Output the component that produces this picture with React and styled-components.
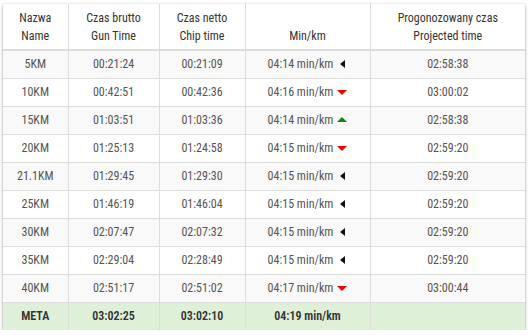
import styled, { createGlobalStyle } from "styled-components"

const GlobalStyle = createGlobalStyle`
  html, body {
    margin: 0;
    padding: 0;
    background: #ffffff;
  }
  body {
    font-family: Roboto, "Liberation Sans", sans-serif;
    font-stretch: condensed;
  }
`

const Page = styled.div`
  padding: 4px 4px 0 3px;
  width: 522px;
`

const Card = styled.div`
  background: #ffffff;
  box-shadow: 0 1px 3px rgba(0, 0, 0, 0.4);
`

const Table = styled.table`
  width: 100%;
  border-collapse: collapse;
  table-layout: fixed;
  font-size: 12px;
  color: #555555;
`

const Th = styled.th`
  font-weight: 400;
  color: #333333;
  line-height: 18px;
  padding: 5px 4px 4px;
  vertical-align: bottom;
  text-align: center;
  border-bottom: 2px solid #dddddd;
  border-right: 1px solid #dddddd;
  &:last-child {
    border-right: none;
  }
`

const Row = styled.tr`
  background: ${p => (p.$meta ? "#dff0d8" : p.$striped ? "#f9f9f9" : "#ffffff")};
  color: ${p => (p.$meta ? "#333333" : "inherit")};
  font-weight: ${p => (p.$meta ? 600 : 400)};
`

const Td = styled.td`
  height: 27px;
  padding: 0 4px;
  line-height: 27px;
  text-align: center;
  border-bottom: 1px solid #dddddd;
  border-right: 1px solid #dddddd;
  &:last-child {
    border-right: none;
  }
  tr:last-child > & {
    border-bottom: none;
  }
`

// small caret after the pace, pointing left / down / up
const Trend = styled.span`
  display: inline-block;
  width: 10px;
  height: 9px;
  margin-left: 4px;
  vertical-align: -1px;
  position: relative;
  &::after {
    content: "";
    position: absolute;
    width: 0;
    height: 0;
    ${p =>
      p.$dir === "left"
        ? `left: 3px; top: 0; border-top: 4.5px solid transparent; border-bottom: 4.5px solid transparent; border-right: 5px solid #111;`
        : p.$dir === "down"
        ? `left: 0; top: 2px; border-left: 5px solid transparent; border-right: 5px solid transparent; border-top: 5px solid #f00000;`
        : `left: 0; top: 1px; border-left: 5px solid transparent; border-right: 5px solid transparent; border-bottom: 5px solid #0a8a0a;`}
  }
`

const splits = [
  ["5KM", "00:21:24", "00:21:09", "04:14", "left", "02:58:38"],
  ["10KM", "00:42:51", "00:42:36", "04:16", "down", "03:00:02"],
  ["15KM", "01:03:51", "01:03:36", "04:14", "up", "02:58:38"],
  ["20KM", "01:25:13", "01:24:58", "04:15", "down", "02:59:20"],
  ["21.1KM", "01:29:45", "01:29:30", "04:15", "left", "02:59:20"],
  ["25KM", "01:46:19", "01:46:04", "04:15", "left", "02:59:20"],
  ["30KM", "02:07:47", "02:07:32", "04:15", "left", "02:59:20"],
  ["35KM", "02:29:04", "02:28:49", "04:15", "left", "02:59:20"],
  ["40KM", "02:51:17", "02:51:02", "04:17", "down", "03:00:44"],
]

const App = () => {
  return (
    <Page>
      <GlobalStyle />
      <Card>
        <Table>
          <colgroup>
            <col style={{ width: 65 }} />
            <col style={{ width: 91 }} />
            <col style={{ width: 86 }} />
            <col style={{ width: 125 }} />
            <col />
          </colgroup>
          <thead>
            <tr>
              <Th>Nazwa<br />Name</Th>
              <Th>Czas brutto<br />Gun Time</Th>
              <Th>Czas netto<br />Chip time</Th>
              <Th>Min/km</Th>
              <Th>Progonozowany czas<br />Projected time</Th>
            </tr>
          </thead>
          <tbody>
            {splits.map(([name, gun, chip, pace, dir, proj], i) => (
              <Row key={name} $striped={i % 2 === 0}>
                <Td>{name}</Td>
                <Td>{gun}</Td>
                <Td>{chip}</Td>
                <Td>
                  {pace} min/km<Trend $dir={dir} />
                </Td>
                <Td>{proj}</Td>
              </Row>
            ))}
            <Row $meta>
              <Td>META</Td>
              <Td>03:02:25</Td>
              <Td>03:02:10</Td>
              <Td>04:19 min/km</Td>
              <Td></Td>
            </Row>
          </tbody>
        </Table>
      </Card>
    </Page>
  )
}

export default App
